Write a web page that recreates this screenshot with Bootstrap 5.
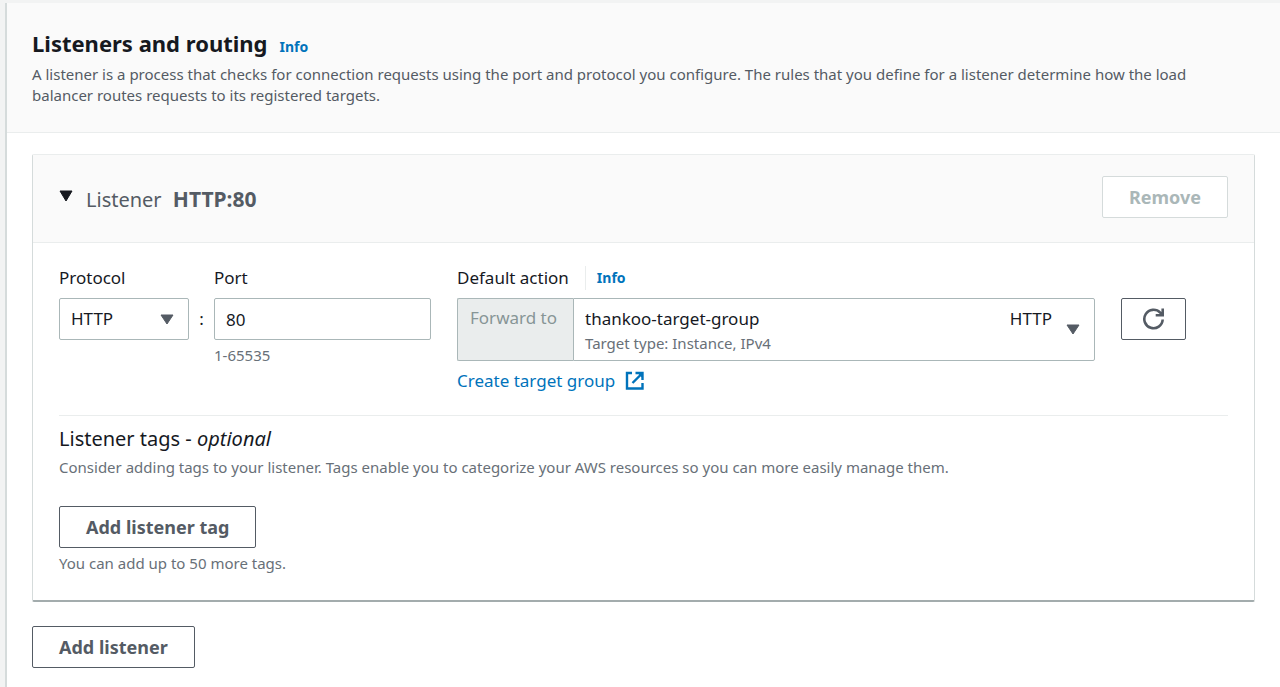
<!DOCTYPE html>
<html lang="en">
<head>
<meta charset="utf-8">
<meta name="viewport" content="width=device-width, initial-scale=1">
<title>Listeners and routing</title>
<link href="https://cdn.jsdelivr.net/npm/bootstrap@5.3.0/dist/css/bootstrap.min.css" rel="stylesheet">
<style>
  body { background: #f2f3f3; color: #16191f; font-family: "Noto Sans", "Open Sans", sans-serif; font-size: 17px; line-height: 24px; }
  a { color: #0073bb; text-decoration: none; }
  a:hover { text-decoration: underline; }
  .panel { margin: 3px 0 0 5px; min-height: calc(100vh - 3px); background: #fff; border-left: 2px solid #d5dbdb; }
  .panel-top { background: #fafafa; border-bottom: 1px solid #eaeded; padding: 26px 25px; }
  .panel-main { padding: 21px 25px 18px; }
  h1 { font-size: 22px; line-height: 28px; font-weight: 700; margin-bottom: 7px; }
  h2 { font-size: 20px; line-height: 28px; font-weight: 400; color: #545b64; }
  h2 strong { font-size: 21px; margin-left: 6px; }
  h3 { font-size: 20px; line-height: 28px; font-weight: 400; }
  .info-link { font-size: 14px; line-height: 24px; font-weight: 700; }
  .description { font-size: 15px; line-height: 21px; color: #545b64; max-width: 1180px; }
  .hint { font-size: 15px; line-height: 20px; color: #687078; }
  .listener { border: 1px solid #d5dbdb; border-top-color: #eaeded; border-bottom: 2px solid #a3acad; border-radius: 2px; }
  .listener-top { background: #fafafa; border-bottom: 1px solid #eaeded; padding: 21px 26px 24px; }
  .listener-main { padding: 23px 26px 27px; }
  .toggle { line-height: 0; }
  .heading-row { padding-top: 4px; }
  .heading-row .toggle { margin: 0 13px 6px 0; }
  .btn-plain { --bs-btn-color: #545b64; --bs-btn-border-color: #545b64; --bs-btn-bg: #fff; --bs-btn-hover-color: #16191f; --bs-btn-hover-bg: #fafafa; --bs-btn-hover-border-color: #16191f;
    --bs-btn-disabled-color: #aab7b8; --bs-btn-disabled-bg: #fff; --bs-btn-disabled-border-color: #d5dbdb; --bs-btn-disabled-opacity: 1;
    --bs-btn-padding-x: 26px; --bs-btn-padding-y: 8px; --bs-btn-font-size: 18px; --bs-btn-font-weight: 700; --bs-btn-line-height: 24px; --bs-btn-border-radius: 2px; }
  .btn-refresh { --bs-btn-padding-x: 20px; margin: 32px 0 0 26px; }
  .field-label { display: block; line-height: 24px; margin-bottom: 8px; }
  .form-control, .form-select { height: 42px; border-color: #aab7b8; border-radius: 2px; color: #16191f; font-size: 17px; line-height: 24px; padding: 8px 11px; }
  .form-select { background-image: url("data:image/svg+xml,%3csvg xmlns='http://www.w3.org/2000/svg' viewBox='0 0 14 11'%3e%3cpath fill='%23545b64' stroke='%23545b64' stroke-linejoin='round' d='M1 1h12L7 10z'/%3e%3c/svg%3e"); background-size: 14px 11px; background-position: right 14px center; }
  .protocol { width: 130px; }
  .port { width: 217px; }
  .below { margin-top: 5px; }
  .colon { width: 25px; padding-top: 41px; text-align: center; }
  .action { flex: 0 1 638px; margin-left: 26px; }
  .action .field-label { margin: 0 16px 0 0; }
  .divided { border-left: 1px solid #eaeded; padding-left: 11px; }
  .prefix { width: 116px; flex: none; background: #eaeded; border: 1px solid #aab7b8; border-right: 0; border-radius: 2px 0 0 2px; color: #879596; padding: 7px 12px; white-space: nowrap; }
  .target .form-select { height: 63px; padding: 8px 11px 29px; border-radius: 0 2px 2px 0; }
  .target-type { left: 12px; top: 35px; pointer-events: none; }
  .target-protocol { right: 43px; top: 9px; pointer-events: none; }
  .rule { border-top: 1px solid #eaeded; margin: 22px 0 9px; }
  .tags-help { margin-bottom: 29px; }
</style>
</head>
<body>
<main class="panel">
  <header class="panel-top">
    <div class="d-flex align-items-baseline">
      <h1 class="me-2 pe-1">Listeners and routing</h1>
      <a href="#" class="info-link">Info</a>
    </div>
    <p class="description mb-0">A listener is a process that checks for connection requests using the port and protocol you configure. The rules that you define for a listener determine how the load balancer routes requests to its registered targets.</p>
  </header>

  <div class="panel-main">
    <section class="listener mb-4">
      <div class="listener-top d-flex justify-content-between align-items-center">
        <div class="heading-row d-flex align-items-center">
          <button type="button" class="toggle btn p-0 border-0" aria-label="Collapse listener" aria-expanded="true">
            <svg width="14" height="12" viewBox="0 0 14 12"><path d="M1 1h12L7 11z" fill="#16191f" stroke="#16191f" stroke-linejoin="round"/></svg>
          </button>
          <h2 class="mb-0">Listener <strong>HTTP:80</strong></h2>
        </div>
        <button type="button" class="btn btn-plain" disabled>Remove</button>
      </div>

      <div class="listener-main">
        <div class="d-flex align-items-start">
          <div class="protocol">
            <label class="field-label" for="protocol">Protocol</label>
            <select id="protocol" class="form-select"><option>HTTP</option><option>HTTPS</option></select>
          </div>
          <div class="colon">:</div>
          <div class="port">
            <label class="field-label" for="port">Port</label>
            <input id="port" class="form-control" type="text" inputmode="numeric" value="80" aria-describedby="port-hint">
            <div id="port-hint" class="hint below">1-65535</div>
          </div>
          <div class="action">
            <div class="d-flex mb-2">
              <label class="field-label" for="target">Default action</label>
              <a href="#" class="info-link divided">Info</a>
            </div>
            <div class="d-flex">
              <span class="prefix">Forward to</span>
              <div class="target position-relative flex-grow-1">
                <select id="target" class="form-select" aria-describedby="target-type"><option>thankoo-target-group</option></select>
                <span id="target-type" class="hint target-type position-absolute">Target type: Instance, IPv4</span>
                <span class="target-protocol position-absolute">HTTP</span>
              </div>
            </div>
            <a href="#" class="d-flex align-items-center mt-2">Create target group
              <svg class="ms-2" width="22" height="20" viewBox="0 0 22 20" fill="none" stroke="currentColor" stroke-width="2.4"><path d="M9 2H4v15.500h15.500V12M12.500 2h7v7M19 2.500L9.500 12"/><path d="M14.500 2h5v5z" fill="currentColor" stroke="none"/></svg>
            </a>
          </div>
          <button type="button" class="btn btn-plain btn-refresh" aria-label="Refresh target groups">
            <svg class="d-block" width="23" height="24" viewBox="0 0 23 24" fill="none" stroke="currentColor" stroke-width="2.6"><path d="M20.700 12.500a9.200 9.200 0 1 1-2.500-6.800l2 2.200M20.700 1.500v6.700h-7"/><path d="M16.500 8.500l4-4v4z" fill="currentColor" stroke="none"/></svg>
          </button>
        </div>

        <div class="rule"></div>
        <h3 class="mb-1">Listener tags - <em>optional</em></h3>
        <p class="hint tags-help">Consider adding tags to your listener. Tags enable you to categorize your AWS resources so you can more easily manage them.</p>
        <button type="button" class="btn btn-plain">Add listener tag</button>
        <div class="hint below">You can add up to 50 more tags.</div>
      </div>
    </section>
    <button type="button" class="btn btn-plain">Add listener</button>
  </div>
</main>
<script src="https://cdn.jsdelivr.net/npm/bootstrap@5.3.0/dist/js/bootstrap.bundle.min.js"></script>
</body>
</html>
